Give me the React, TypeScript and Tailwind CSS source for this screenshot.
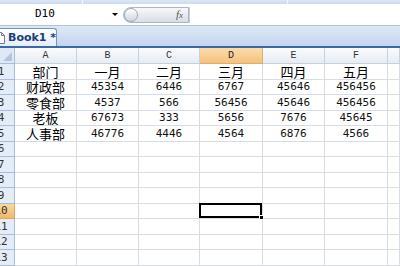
const letters = ['A', 'B', 'C', 'D', 'E', 'F', ''];

const data: string[][] = [
  ['部门', '一月', '二月', '三月', '四月', '五月'],
  ['财政部', '45354', '6446', '6767', '45646', '456456'],
  ['零食部', '4537', '566', '56456', '45646', '456456'],
  ['老板', '67673', '333', '5656', '7676', '45645'],
  ['人事部', '46776', '4446', '4564', '6876', '4566'],
];

const isCjk = (s: string) => /[\u4e00-\u9fff]/.test(s);

function Cell({ text, selected }: { text?: string; selected?: boolean }) {
  const cjk = text ? isCjk(text) : false;
  return (
    <div className="relative flex items-center justify-center border-r border-b border-[#d6dde8] bg-white">
      {text && (
        <span
          className={
            cjk
              ? "text-[13px] leading-none text-black whitespace-nowrap font-['Noto_Sans_CJK_SC',sans-serif]"
              : "text-[11px] leading-none text-[#111] whitespace-nowrap font-['DejaVu_Sans_Mono',monospace]"
          }
        >
          {text}
        </span>
      )}
      {selected && (
        <div className="absolute -left-px -top-px right-0 bottom-0 z-10 border-2 border-black">
          <div className="absolute -right-[4px] -bottom-[4px] h-[5px] w-[5px] bg-black border border-white" />
        </div>
      )}
    </div>
  );
}

function RowHeader({ n, active }: { n: number; active?: boolean }) {
  return (
    <div
      className={
        'overflow-hidden border-r border-b flex items-center ' +
        (active
          ? 'bg-gradient-to-b from-[#f9d99f] to-[#f1b968] border-[#e0a858]'
          : 'bg-[#e4ecf7] border-[#a9bdd6]')
      }
    >
      <div className="-ml-[15px] w-[32px] shrink-0 text-center text-[11px] leading-none text-[#333] font-['DejaVu_Sans_Mono',monospace]">
        {n}
      </div>
    </div>
  );
}

export default function App() {
  const rows = Array.from({ length: 14 }, (_, i) => i + 1);

  return (
    <div className="h-[266px] w-[400px] overflow-hidden bg-white flex flex-col font-['Liberation_Sans',sans-serif]">
      {/* ribbon edge */}
      <div className="h-[4px] shrink-0 flex bg-gradient-to-b from-[#dce8f6] to-[#c9daef]">
        <div className="w-[83px] border-r border-[#f4f8fd]" />
        <div className="w-[205px] border-r border-[#f4f8fd]" />
      </div>

      {/* formula bar */}
      <div className="h-[22px] shrink-0 flex items-center bg-white border-b border-[#b4c4d8]">
        <div className="w-[120px] h-full flex items-center relative">
          <span className="ml-[35px] text-[11px] text-black font-['DejaVu_Sans_Mono',monospace]">D10</span>
          <span className="absolute left-[112px] top-[9px] h-0 w-0 border-x-[3px] border-t-[3px] border-x-transparent border-t-black" />
        </div>
        <div className="ml-[3px] h-[16px] w-[66px] flex items-center rounded-l-full border border-[#aab6c7] bg-gradient-to-b from-[#f6f8fb] to-[#d8dee7]">
          <div className="h-[14px] w-[14px] rounded-full border border-[#9aa8bc] bg-gradient-to-b from-white to-[#cfd6e0]" />
          <span className="ml-auto mr-[5px] text-[11px] italic text-[#555] font-['Liberation_Serif',serif]">
            f<span className="text-[9px]">x</span>
          </span>
        </div>
        <div className="flex-1 h-[16px] border-l border-[#c3cedc] bg-white" />
      </div>

      {/* sheet tab bar */}
      <div className="h-[22px] shrink-0 flex items-end bg-gradient-to-b from-[#dce8f7] to-[#c3d6ee] border-b-2 border-[#3c68a6]">
        <div className="h-[18px] w-[57px] flex items-center border-t border-r border-[#7394c4] rounded-tr-[3px] bg-gradient-to-b from-white to-[#e3ecf8]">
          <svg width="10" height="12" viewBox="0 0 10 12" className="-ml-[5px] shrink-0">
            <path d="M0.5 0.5 H6.5 L9.5 3.5 V11.5 H0.5 Z" fill="#fff" stroke="#6e7f99" />
            <path d="M6.5 0.5 V3.5 H9.5" fill="none" stroke="#6e7f99" />
          </svg>
          <span className="ml-[3px] whitespace-nowrap text-[11px] font-bold text-[#1b3f7a] font-['DejaVu_Sans',sans-serif] leading-none">
            Book1 *
          </span>
        </div>
      </div>

      {/* grid */}
      <div className="shrink-0 grid grid-cols-[15px_62px_62px_61px_63px_62px_63px_1fr] grid-rows-[16px] auto-rows-[15.5px]">
        <div className="flex items-end justify-end border-r border-b border-[#a9bdd6] bg-[#dfe8f4] p-[2px]">
          <svg width="9" height="9" viewBox="0 0 9 9">
            <path d="M9 0 V9 H0 Z" fill="#b3c5dc" />
          </svg>
        </div>
        {letters.map((l, i) => (
          <div
            key={i}
            className={
              "flex items-center justify-center border-r border-b text-[10px] leading-none font-['Liberation_Mono',monospace] " +
              (l === 'D'
                ? 'bg-gradient-to-b from-[#fbdcaa] to-[#f4c27d] border-[#e0ad6c] text-[#222]'
                : 'bg-gradient-to-b from-[#f9fbfd] to-[#e7ecf3] border-[#c6d1df] text-[#333]')
            }
          >
            {l}
          </div>
        ))}
        {rows.map((r) => (
          <div key={r} className="contents">
            <RowHeader n={r} active={r === 10} />
            {Array.from({ length: 7 }, (_, c) => (
              <Cell key={c} text={data[r - 1]?.[c]} selected={r === 10 && c === 3} />
            ))}
          </div>
        ))}
      </div>
    </div>
  );
}
